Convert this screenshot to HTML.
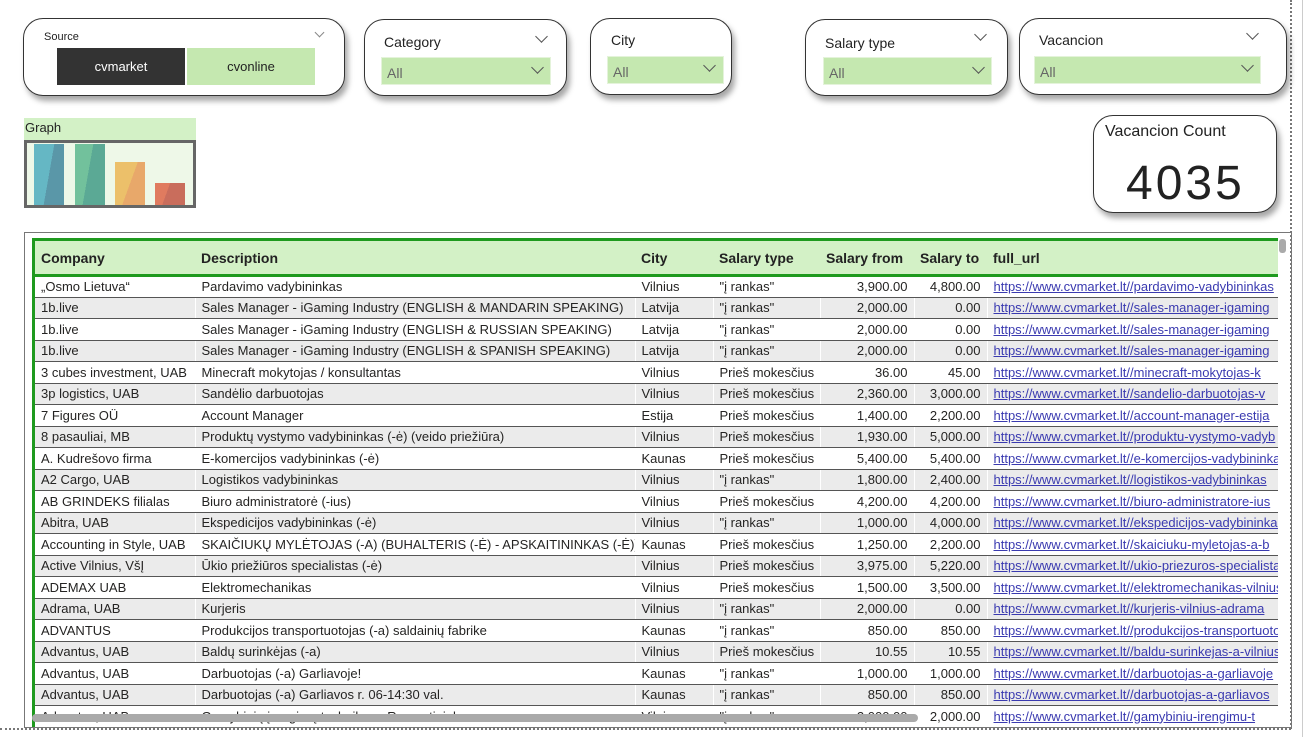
<!DOCTYPE html>
<html><head><meta charset="utf-8"><style>
*{margin:0;padding:0;box-sizing:border-box}
body{width:1312px;height:737px;background:#fff;position:relative;overflow:hidden;font-family:"Liberation Sans",sans-serif;color:#252423}
.card{position:absolute;background:#fff;border:1px solid #333;border-radius:20px;box-shadow:3px 5px 6px rgba(0,0,0,.35)}
.lbl{position:absolute;font-size:14px;color:#222}
.dd{position:absolute;background:#c5e8b0;border:1px solid #e4f3da;font-size:14px;color:#666;padding:7px 0 0 5px}
.chev{position:absolute;width:9px;height:9px;border-right:1px solid #555;border-bottom:1px solid #555;transform:rotate(45deg)}
table{border-collapse:collapse;table-layout:fixed;font-size:13px}
td,th{white-space:nowrap;overflow:hidden;padding:0 6px;text-align:left}
th{height:36px;font-size:14px;font-weight:bold;color:#222}
td{height:21.5px;border-bottom:1px solid #555;border-right:1px solid #fff}
tr.g td{background:#ebebeb}
td.r{text-align:right}
td a{color:#3a3ab0;text-decoration:underline}
</style></head><body>
<div style="position:absolute;left:1290px;top:0;height:729px;border-left:2px dotted #777"></div>
<div style="position:absolute;left:0;top:728px;width:1291px;border-top:2px dotted #777"></div>
<div style="position:absolute;left:1302px;top:0;height:737px;border-left:1px solid #ccc"></div>

<div class="card" style="left:23px;top:18px;width:322px;height:78px">
 <div class="lbl" style="left:20px;top:12px;font-size:11px">Source</div>
 <div class="chev" style="left:292px;top:10px;width:7px;height:7px;border-color:#888"></div>
 <div style="position:absolute;left:33px;top:29px;width:128px;height:37px;background:#333;color:#fff;font-size:13px;text-align:center;line-height:37px">cvmarket</div>
 <div style="position:absolute;left:163px;top:29px;width:128px;height:37px;background:#c5e8b0;color:#222;font-size:13px;text-align:center;line-height:37px">cvonline</div>
</div>

<div class="card" style="left:364px;top:19px;width:203px;height:77px">
 <div class="lbl" style="left:19px;top:14px">Category</div>
 <div class="chev" style="left:172px;top:12px"></div>
 <div class="dd" style="left:16px;top:37px;width:170px;height:28px">All</div>
 <div class="chev" style="left:168px;top:43px"></div>
</div>

<div class="card" style="left:590px;top:18px;width:142px;height:77px">
 <div class="lbl" style="left:20px;top:13px">City</div>
 <div class="dd" style="left:16px;top:37px;width:117px;height:28px">All</div>
 <div class="chev" style="left:114px;top:42px"></div>
</div>

<div class="card" style="left:805px;top:19px;width:203px;height:77px">
 <div class="lbl" style="left:19px;top:15px">Salary type</div>
 <div class="chev" style="left:170px;top:10px"></div>
 <div class="dd" style="left:17px;top:37px;width:169px;height:28px">All</div>
 <div class="chev" style="left:168px;top:43px"></div>
</div>

<div class="card" style="left:1019px;top:18px;width:268px;height:77px">
 <div class="lbl" style="left:19px;top:13px">Vacancion</div>
 <div class="chev" style="left:228px;top:10px"></div>
 <div class="dd" style="left:14px;top:37px;width:227px;height:28px">All</div>
 <div class="chev" style="left:223px;top:42px"></div>
</div>

<div style="position:absolute;left:24px;top:118px;width:172px;height:22px;background:#d3f1c6;font-size:13px;padding:2px 0 0 1px;color:#222">Graph</div>
<div style="position:absolute;left:24px;top:140px;width:172px;height:68px;border:3px solid #666;background:#eef8e8">
 <div style="position:absolute;left:7px;top:1px;width:30px;height:61px;background:linear-gradient(100deg,#65b7c4 50%,#5a97a8 50%)"></div>
 <div style="position:absolute;left:48px;top:1px;width:30px;height:61px;background:linear-gradient(100deg,#72c19c 45%,#5ba995 45%)"></div>
 <div style="position:absolute;left:88px;top:19px;width:30px;height:43px;background:linear-gradient(110deg,#ecc06a 50%,#e8a86a 50%)"></div>
 <div style="position:absolute;left:128px;top:40px;width:30px;height:22px;background:linear-gradient(110deg,#e07b5f 40%,#c96d5c 40%)"></div>
</div>

<div class="card" style="left:1093px;top:115px;width:184px;height:98px">
 <div class="lbl" style="left:11px;top:7px;font-size:16px">Vacancion Count</div>
 <div style="position:absolute;left:32px;top:40px;font-size:48px;letter-spacing:3px;color:#222">4035</div>
</div>

<div style="position:absolute;left:24px;top:232px;width:1268px;height:496px;border:1px solid #777;overflow:hidden">
 <div style="position:absolute;left:7px;top:5px;width:1246px;height:495px;border-left:3px solid #1e9a1e;overflow:hidden">
 <table style="width:1243px">
  <colgroup><col style="width:160px"><col style="width:440px"><col style="width:78px"><col style="width:107px"><col style="width:94px"><col style="width:73px"><col style="width:291px"></colgroup>
  <tr style="background:#d3f1c6;border-top:3px solid #1e9a1e;border-bottom:3px solid #1e9a1e"><th>Company</th><th>Description</th><th>City</th><th>Salary type</th><th>Salary from</th><th>Salary to</th><th>full_url</th></tr>
  <tr><td>„Osmo Lietuva“</td><td>Pardavimo vadybininkas</td><td>Vilnius</td><td>"į rankas"</td><td class="r">3,900.00</td><td class="r">4,800.00</td><td><a>https://www.cvmarket.lt//pardavimo-vadybininkas</a></td></tr>
  <tr class="g"><td>1b.live</td><td>Sales Manager - iGaming Industry (ENGLISH &amp; MANDARIN SPEAKING)</td><td>Latvija</td><td>"į rankas"</td><td class="r">2,000.00</td><td class="r">0.00</td><td><a>https://www.cvmarket.lt//sales-manager-igaming</a></td></tr>
  <tr><td>1b.live</td><td>Sales Manager - iGaming Industry (ENGLISH &amp; RUSSIAN SPEAKING)</td><td>Latvija</td><td>"į rankas"</td><td class="r">2,000.00</td><td class="r">0.00</td><td><a>https://www.cvmarket.lt//sales-manager-igaming</a></td></tr>
  <tr class="g"><td>1b.live</td><td>Sales Manager - iGaming Industry (ENGLISH &amp; SPANISH SPEAKING)</td><td>Latvija</td><td>"į rankas"</td><td class="r">2,000.00</td><td class="r">0.00</td><td><a>https://www.cvmarket.lt//sales-manager-igaming</a></td></tr>
  <tr><td>3 cubes investment, UAB</td><td>Minecraft mokytojas / konsultantas</td><td>Vilnius</td><td>Prieš mokesčius</td><td class="r">36.00</td><td class="r">45.00</td><td><a>https://www.cvmarket.lt//minecraft-mokytojas-k</a></td></tr>
  <tr class="g"><td>3p logistics, UAB</td><td>Sandėlio darbuotojas</td><td>Vilnius</td><td>Prieš mokesčius</td><td class="r">2,360.00</td><td class="r">3,000.00</td><td><a>https://www.cvmarket.lt//sandelio-darbuotojas-v</a></td></tr>
  <tr><td>7 Figures OÜ</td><td>Account Manager</td><td>Estija</td><td>Prieš mokesčius</td><td class="r">1,400.00</td><td class="r">2,200.00</td><td><a>https://www.cvmarket.lt//account-manager-estija</a></td></tr>
  <tr class="g"><td>8 pasauliai, MB</td><td>Produktų vystymo vadybininkas (-ė) (veido priežiūra)</td><td>Vilnius</td><td>Prieš mokesčius</td><td class="r">1,930.00</td><td class="r">5,000.00</td><td><a>https://www.cvmarket.lt//produktu-vystymo-vadyb</a></td></tr>
  <tr><td>A. Kudrešovo firma</td><td>E-komercijos vadybininkas (-ė)</td><td>Kaunas</td><td>Prieš mokesčius</td><td class="r">5,400.00</td><td class="r">5,400.00</td><td><a>https://www.cvmarket.lt//e-komercijos-vadybininkas</a></td></tr>
  <tr class="g"><td>A2 Cargo, UAB</td><td>Logistikos vadybininkas</td><td>Vilnius</td><td>"į rankas"</td><td class="r">1,800.00</td><td class="r">2,400.00</td><td><a>https://www.cvmarket.lt//logistikos-vadybininkas</a></td></tr>
  <tr><td>AB GRINDEKS filialas</td><td>Biuro administratorė (-ius)</td><td>Vilnius</td><td>Prieš mokesčius</td><td class="r">4,200.00</td><td class="r">4,200.00</td><td><a>https://www.cvmarket.lt//biuro-administratore-ius</a></td></tr>
  <tr class="g"><td>Abitra, UAB</td><td>Ekspedicijos vadybininkas (-ė)</td><td>Vilnius</td><td>"į rankas"</td><td class="r">1,000.00</td><td class="r">4,000.00</td><td><a>https://www.cvmarket.lt//ekspedicijos-vadybininkas</a></td></tr>
  <tr><td>Accounting in Style, UAB</td><td>SKAIČIUKŲ MYLĖTOJAS (-A) (BUHALTERIS (-Ė) - APSKAITININKAS (-Ė))</td><td>Kaunas</td><td>Prieš mokesčius</td><td class="r">1,250.00</td><td class="r">2,200.00</td><td><a>https://www.cvmarket.lt//skaiciuku-myletojas-a-b</a></td></tr>
  <tr class="g"><td>Active Vilnius, VšĮ</td><td>Ūkio priežiūros specialistas (-ė)</td><td>Vilnius</td><td>Prieš mokesčius</td><td class="r">3,975.00</td><td class="r">5,220.00</td><td><a>https://www.cvmarket.lt//ukio-priezuros-specialistas</a></td></tr>
  <tr><td>ADEMAX UAB</td><td>Elektromechanikas</td><td>Vilnius</td><td>Prieš mokesčius</td><td class="r">1,500.00</td><td class="r">3,500.00</td><td><a>https://www.cvmarket.lt//elektromechanikas-vilnius</a></td></tr>
  <tr class="g"><td>Adrama, UAB</td><td>Kurjeris</td><td>Vilnius</td><td>"į rankas"</td><td class="r">2,000.00</td><td class="r">0.00</td><td><a>https://www.cvmarket.lt//kurjeris-vilnius-adrama</a></td></tr>
  <tr><td>ADVANTUS</td><td>Produkcijos transportuotojas (-a) saldainių fabrike</td><td>Kaunas</td><td>"į rankas"</td><td class="r">850.00</td><td class="r">850.00</td><td><a>https://www.cvmarket.lt//produkcijos-transportuotojas</a></td></tr>
  <tr class="g"><td>Advantus, UAB</td><td>Baldų surinkėjas (-a)</td><td>Vilnius</td><td>Prieš mokesčius</td><td class="r">10.55</td><td class="r">10.55</td><td><a>https://www.cvmarket.lt//baldu-surinkejas-a-vilnius</a></td></tr>
  <tr><td>Advantus, UAB</td><td>Darbuotojas (-a) Garliavoje!</td><td>Kaunas</td><td>"į rankas"</td><td class="r">1,000.00</td><td class="r">1,000.00</td><td><a>https://www.cvmarket.lt//darbuotojas-a-garliavoje</a></td></tr>
  <tr class="g"><td>Advantus, UAB</td><td>Darbuotojas (-a) Garliavos r. 06-14:30 val.</td><td>Kaunas</td><td>"į rankas"</td><td class="r">850.00</td><td class="r">850.00</td><td><a>https://www.cvmarket.lt//darbuotojas-a-garliavos</a></td></tr>
  <tr><td>Advantus, UAB</td><td>Gamybinių įrengimų technikas - Remontininkas</td><td>Vilnius</td><td>"į rankas"</td><td class="r">2,000.00</td><td class="r">2,000.00</td><td><a>https://www.cvmarket.lt//gamybiniu-irengimu-t</a></td></tr>
 </table>
 </div>
 <div style="position:absolute;left:7px;top:481px;width:886px;height:8px;background:#aaa;border-radius:4px"></div>
 <div style="position:absolute;left:1254px;top:6px;width:7px;height:14px;background:#aaa;border-radius:3px"></div>
</div>
</body></html>
